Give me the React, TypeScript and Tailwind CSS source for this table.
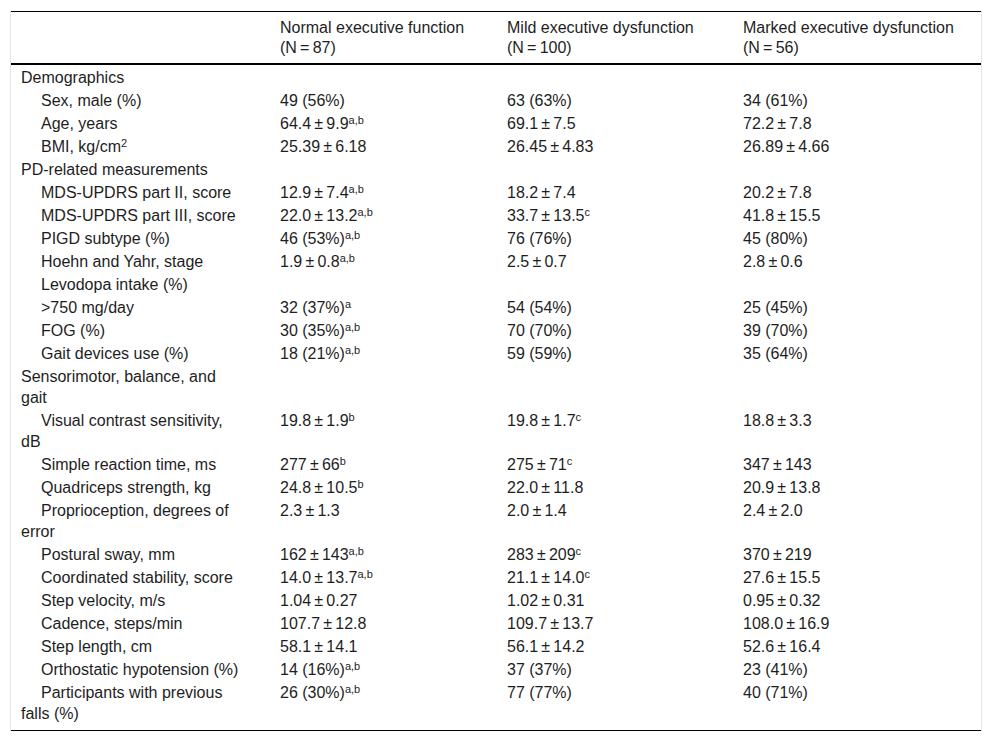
import React from 'react';

type Cell = [string, string?];

interface Row {
  label: string;
  group?: boolean;
  sup?: string;
  values?: Cell[];
}

const pm = (a: string, b: string) => `${a}\u2009±\u2009${b}`;

const ROWS: Row[] = [
  { label: 'Demographics', group: true },
  { label: 'Sex, male (%)', values: [['49 (56%)'], ['63 (63%)'], ['34 (61%)']] },
  { label: 'Age, years', values: [[pm('64.4', '9.9'), 'a,b'], [pm('69.1', '7.5')], [pm('72.2', '7.8')]] },
  { label: 'BMI, kg/cm', sup: '2', values: [[pm('25.39', '6.18')], [pm('26.45', '4.83')], [pm('26.89', '4.66')]] },
  { label: 'PD-related measurements', group: true },
  { label: 'MDS-UPDRS part II, score', values: [[pm('12.9', '7.4'), 'a,b'], [pm('18.2', '7.4')], [pm('20.2', '7.8')]] },
  { label: 'MDS-UPDRS part III, score', values: [[pm('22.0', '13.2'), 'a,b'], [pm('33.7', '13.5'), 'c'], [pm('41.8', '15.5')]] },
  { label: 'PIGD subtype (%)', values: [['46 (53%)', 'a,b'], ['76 (76%)'], ['45 (80%)']] },
  { label: 'Hoehn and Yahr, stage', values: [[pm('1.9', '0.8'), 'a,b'], [pm('2.5', '0.7')], [pm('2.8', '0.6')]] },
  { label: 'Levodopa intake (%)', values: [[''], [''], ['']] },
  { label: '>750 mg/day', values: [['32 (37%)', 'a'], ['54 (54%)'], ['25 (45%)']] },
  { label: 'FOG (%)', values: [['30 (35%)', 'a,b'], ['70 (70%)'], ['39 (70%)']] },
  { label: 'Gait devices use (%)', values: [['18 (21%)', 'a,b'], ['59 (59%)'], ['35 (64%)']] },
  { label: 'Sensorimotor, balance, and gait', group: true },
  { label: 'Visual contrast sensitivity, dB', values: [[pm('19.8', '1.9'), 'b'], [pm('19.8', '1.7'), 'c'], [pm('18.8', '3.3')]] },
  { label: 'Simple reaction time, ms', values: [[pm('277', '66'), 'b'], [pm('275', '71'), 'c'], [pm('347', '143')]] },
  { label: 'Quadriceps strength, kg', values: [[pm('24.8', '10.5'), 'b'], [pm('22.0', '11.8')], [pm('20.9', '13.8')]] },
  { label: 'Proprioception, degrees of error', values: [[pm('2.3', '1.3')], [pm('2.0', '1.4')], [pm('2.4', '2.0')]] },
  { label: 'Postural sway, mm', values: [[pm('162', '143'), 'a,b'], [pm('283', '209'), 'c'], [pm('370', '219')]] },
  { label: 'Coordinated stability, score', values: [[pm('14.0', '13.7'), 'a,b'], [pm('21.1', '14.0'), 'c'], [pm('27.6', '15.5')]] },
  { label: 'Step velocity, m/s', values: [[pm('1.04', '0.27')], [pm('1.02', '0.31')], [pm('0.95', '0.32')]] },
  { label: 'Cadence, steps/min', values: [[pm('107.7', '12.8')], [pm('109.7', '13.7')], [pm('108.0', '16.9')]] },
  { label: 'Step length, cm', values: [[pm('58.1', '14.1')], [pm('56.1', '14.2')], [pm('52.6', '16.4')]] },
  { label: 'Orthostatic hypotension (%)', values: [['14 (16%)', 'a,b'], ['37 (37%)'], ['23 (41%)']] },
  { label: 'Participants with previous falls (%)', values: [['26 (30%)', 'a,b'], ['77 (77%)'], ['40 (71%)']] },
];

const HEADERS: [string, string][] = [
  ['Normal executive function', '(N\u2009=\u200987)'],
  ['Mild executive dysfunction', '(N\u2009=\u2009100)'],
  ['Marked executive dysfunction', '(N\u2009=\u200956)'],
];

const cols = 'grid grid-cols-[258px_227px_236px_249px]';

export default function App() {
  return (
    <div className="min-h-screen bg-white pl-[10px] pt-[11px] font-['Liberation_Sans',Arial,sans-serif] text-[16px] text-[#1e1e1e]">
      <div className="w-[972px] border-x border-[#e4e4e4]">
        {/* header */}
        <div className={`${cols} border-t border-b-2 border-black pt-[6px] pb-[5px] leading-[20px]`}>
          <div />
          {HEADERS.map(([a, b]) => (
            <div key={a} className="pl-[11px]">
              <div>{a}</div>
              <div>{b}</div>
            </div>
          ))}
        </div>

        {/* body */}
        <div className="border-b border-black pt-[1px] pb-[5px]">
          {ROWS.map((r, i) => (
            <div key={i} className={`${cols} py-[1px] leading-[21px]`}>
              <div className={`pl-[10px] pr-[26px] ${r.group ? '' : 'indent-[20px]'}`}>
                {r.label}
                {r.sup && <sup className="text-[11px]">{r.sup}</sup>}
              </div>
              {(r.values ?? [[''], [''], ['']]).map(([v, s], j) => (
                <div key={j} className="pl-[11px]">
                  {v}
                  {s && <sup className="text-[11px]">{s}</sup>}
                </div>
              ))}
            </div>
          ))}
        </div>
      </div>
    </div>
  );
}
